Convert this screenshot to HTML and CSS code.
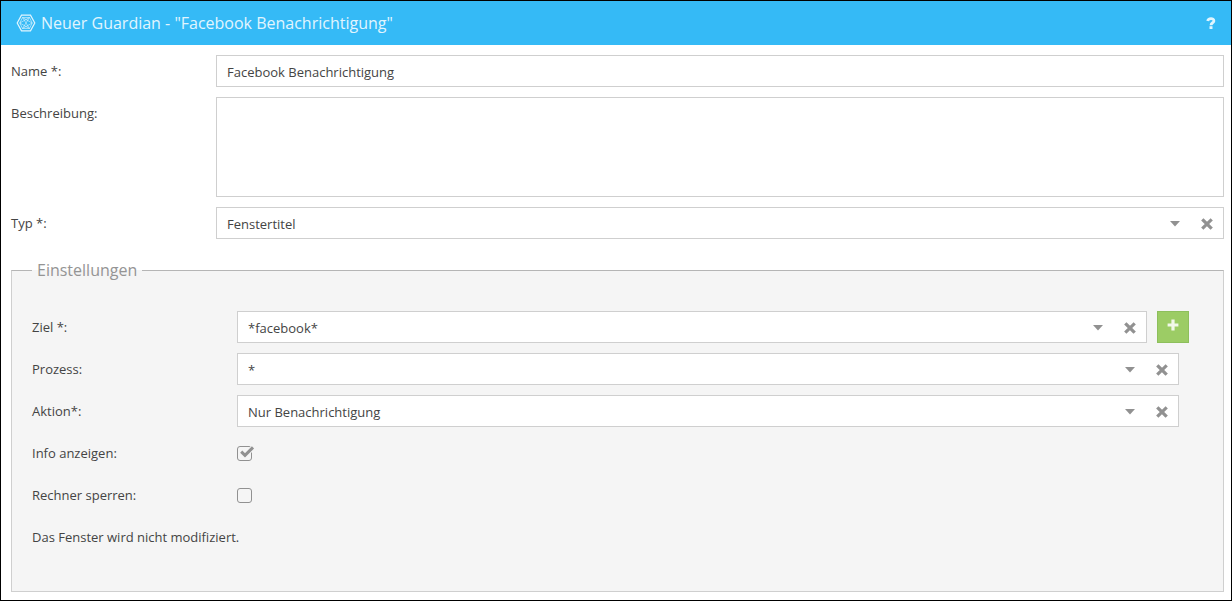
FILE: index.html
```html
<!DOCTYPE html>
<html lang="de">
<head>
<meta charset="utf-8">
<meta name="viewport" content="width=device-width, initial-scale=1">
<title>Neuer Guardian</title>
<link rel="stylesheet" href="styles.css">
</head>
<body>
<svg class="sprite" aria-hidden="true">
  <symbol id="caret" viewBox="0 0 10 6"><path d="M0 0H10L5 5.5Z"/></symbol>
  <symbol id="cross" viewBox="0 0 12 12"><path d="M2.4 2.4L9.6 9.6M9.6 2.4L2.4 9.6" fill="none" stroke="currentColor" stroke-width="3.2" stroke-linecap="square" stroke-linejoin="round"/></symbol>
</svg>
<main class="window">
  <header class="titlebar">
    <svg class="logo" viewBox="0 0 20 18" aria-hidden="true">
      <path class="logo-frame" d="M5.5 1.2H14.5L18.8 9L14.5 16.8H5.5L1.2 9Z"/>
      <path class="logo-mesh" d="M6.5 3.5H13.5L16.2 9L13.5 14.5H6.5L3.8 9ZM6.5 3.5L13.5 14.5M13.5 3.5L6.5 14.5M6.5 3.5L16.2 9L6.5 14.5M13.5 3.5L3.8 9L13.5 14.5"/>
    </svg>
    <h1 class="title">Neuer Guardian - "Facebook Benachrichtigung"</h1>
    <button class="help" type="button" aria-label="Hilfe">
      <svg class="help-icon" viewBox="0 0 10 12" aria-hidden="true"><path d="M1.7 4C2.3 1 7.9 0.8 7.9 3.9C7.9 5.9 5 5.6 5 8.2" fill="none" stroke="currentColor" stroke-width="2.8"/><path d="M3.5 9.2H6.5V12H3.5Z"/></svg>
    </button>
  </header>
  <form class="form">
    <div class="row">
      <label class="label" for="name">Name *:</label>
      <input class="control" id="name" type="text" value="Facebook Benachrichtigung">
    </div>
    <div class="row">
      <label class="label" for="description">Beschreibung:</label>
      <textarea class="control control-area" id="description"></textarea>
    </div>
    <div class="row">
      <label class="label" for="type">Typ *:</label>
      <div class="combo">
        <select class="control combo-select" id="type"><option>Fenstertitel</option></select>
        <svg class="caret" aria-hidden="true"><use href="#caret"/></svg>
        <button class="clear" type="button" aria-label="Typ leeren"><svg class="cross" aria-hidden="true"><use href="#cross"/></svg></button>
      </div>
    </div>
    <fieldset class="settings">
      <legend class="legend">Einstellungen</legend>
      <div class="settings-rows">
        <div class="row row-action">
          <label class="label" for="target">Ziel *:</label>
          <div class="combo">
            <select class="control combo-select" id="target"><option>*facebook*</option></select>
            <svg class="caret" aria-hidden="true"><use href="#caret"/></svg>
            <button class="clear" type="button" aria-label="Ziel leeren"><svg class="cross" aria-hidden="true"><use href="#cross"/></svg></button>
          </div>
          <button class="add" type="button" aria-label="Ziel hinzufügen"><svg class="plus" viewBox="0 0 12 12" aria-hidden="true"><path d="M4.4 0.6H7.6V4.4H11.4V7.6H7.6V11.4H4.4V7.6H0.6V4.4H4.4Z"/></svg></button>
        </div>
        <div class="row">
          <label class="label" for="process">Prozess:</label>
          <div class="combo">
            <select class="control combo-select" id="process"><option>*</option></select>
            <svg class="caret" aria-hidden="true"><use href="#caret"/></svg>
            <button class="clear" type="button" aria-label="Prozess leeren"><svg class="cross" aria-hidden="true"><use href="#cross"/></svg></button>
          </div>
        </div>
        <div class="row">
          <label class="label" for="action">Aktion*:</label>
          <div class="combo">
            <select class="control combo-select" id="action"><option>Nur Benachrichtigung</option></select>
            <svg class="caret" aria-hidden="true"><use href="#caret"/></svg>
            <button class="clear" type="button" aria-label="Aktion leeren"><svg class="cross" aria-hidden="true"><use href="#cross"/></svg></button>
          </div>
        </div>
        <div class="row">
          <label class="label" for="info">Info anzeigen:</label>
          <div class="check">
            <input class="check-input" id="info" type="checkbox" checked>
            <svg class="check-mark" viewBox="0 0 18 16" aria-hidden="true"><path class="check-halo" d="M4.2 6.6L8 10.4L16 2.4"/><path class="check-tick" d="M4.2 6.6L8 10.4L16 2.4"/></svg>
          </div>
        </div>
        <div class="row">
          <label class="label" for="lock">Rechner sperren:</label>
          <div class="check">
            <input class="check-input" id="lock" type="checkbox">
            <svg class="check-mark" viewBox="0 0 18 16" aria-hidden="true"><path class="check-halo" d="M4.2 6.6L8 10.4L16 2.4"/><path class="check-tick" d="M4.2 6.6L8 10.4L16 2.4"/></svg>
          </div>
        </div>
        <p class="note">Das Fenster wird nicht modifiziert.</p>
      </div>
    </fieldset>
  </form>
</main>
</body>
</html>
```
FILE: styles.css
```css
* { box-sizing: border-box; }

body {
  margin: 0;
  background: #fff;
  color: #444;
  font: 13px/32px "Open Sans", sans-serif;
}

.sprite { display: none; }

.window {
  min-height: 100vh;
  border: 1px solid #000;
}

.titlebar {
  display: flex;
  align-items: center;
  gap: 5px;
  height: 44px;
  padding: 0 15px;
  background: #35baf6;
  color: #e1f5fe;
}

.logo {
  width: 20px;
  height: 18px;
  fill: none;
  stroke: currentColor;
}

.logo-frame { stroke-width: 1.2; }
.logo-mesh { stroke-width: 0.6; }

.title {
  flex: 1;
  margin: 0;
  font-size: 16px;
  font-weight: 400;
}

.help,
.clear,
.add {
  display: flex;
  align-items: center;
  justify-content: center;
  margin: 0;
  padding: 0;
  border: 0;
  background: none;
  color: inherit;
  cursor: pointer;
}

.help-icon {
  width: 10px;
  height: 12px;
  fill: currentColor;
}

.form {
  display: flex;
  flex-direction: column;
  gap: 10px;
  padding: 10px 7px 8px 10px;
}

.row {
  display: grid;
  grid-template-columns: 205px minmax(0, 1fr);
}

.control {
  width: 100%;
  height: 32px;
  margin: 0;
  padding: 2px 10px 0;
  border: 1px solid #cfcfcf;
  border-radius: 0;
  background: #fff;
  color: inherit;
  font: 13px/20px "Open Sans", sans-serif;
  appearance: none;
}

.control-area {
  display: block;
  height: 100px;
  resize: none;
}

.combo {
  display: grid;
  grid-template-columns: minmax(0, 1fr) 32px 32px 1px;
  align-items: center;
}

.combo-select { grid-area: 1 / 1 / 2 / 5; }

.caret {
  grid-area: 1 / 2;
  justify-self: center;
  width: 10px;
  height: 6px;
  margin-top: 2px;
  fill: #919191;
  pointer-events: none;
}

.clear {
  grid-area: 1 / 3;
  height: 32px;
  padding-top: 2px;
  color: #919191;
}

.cross {
  width: 12px;
  height: 12px;
}

.settings {
  min-width: 0;
  margin: 10px 0 0;
  padding: 30px 34px 38px 20px;
  border: 1px solid #cfcfcf;
  border-top-color: #b5b5b5;
  background: #f5f5f5;
}

.legend {
  padding: 0 5px;
  color: #949494;
  font-size: 16px;
  line-height: 22px;
}

.settings-rows {
  display: flex;
  flex-direction: column;
  gap: 10px;
  padding-right: 10px;
}

.row-action {
  grid-template-columns: 205px minmax(0, 1fr) 32px;
  margin-right: -10px;
}

.row-action .combo { margin-right: 10px; }

.add {
  height: 32px;
  padding-bottom: 4px;
  border: 1px solid #8dbf5c;
  background: #9ccc65;
  color: #f1f8e9;
}

.plus {
  width: 12px;
  height: 12px;
  fill: currentColor;
}

.check {
  display: grid;
  grid-template-columns: 18px;
  align-content: center;
}

.check-input {
  grid-area: 1 / 1;
  align-self: center;
  width: 15px;
  height: 15px;
  margin: 0;
  border: 1px solid #919191;
  border-radius: 3px;
  appearance: none;
}

.check-mark {
  display: none;
  grid-area: 1 / 1;
  width: 18px;
  height: 16px;
  fill: none;
  pointer-events: none;
}

.check-input:checked + .check-mark { display: block; }

.check-halo {
  stroke: #f5f5f5;
  stroke-width: 5;
}

.check-tick {
  stroke: #919191;
  stroke-width: 3;
}

.note { margin: 0; }
```
